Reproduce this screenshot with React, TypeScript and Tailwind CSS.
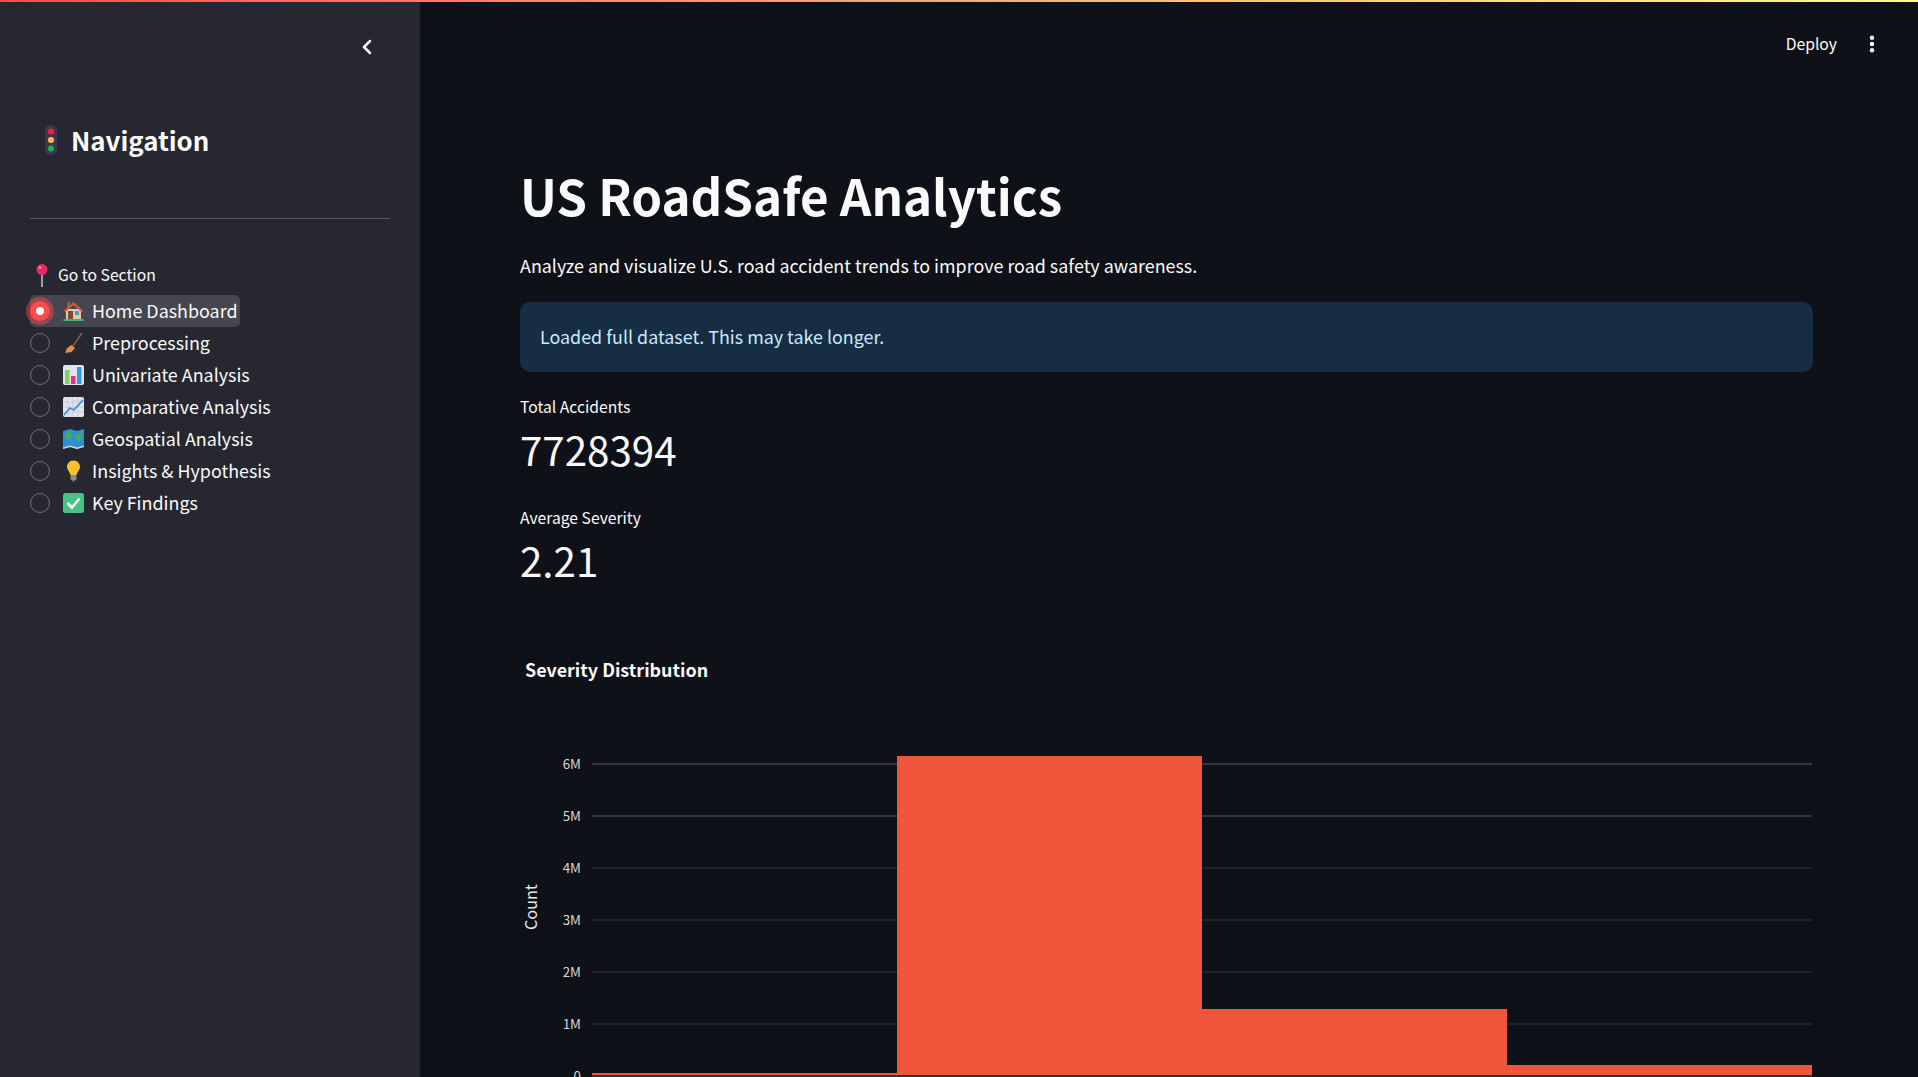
import { ChevronLeft } from 'lucide-react';
import type { ReactNode } from 'react';

const font = '[font-family:"Noto_Sans_CJK_SC","Liberation_Sans",sans-serif]';

function TrafficLight() {
  return (
    <svg width="14" height="30" viewBox="0 0 14 30">
      <rect x="1" y="0" width="12" height="30" rx="6" fill="#40344f" />
      <circle cx="7" cy="6.5" r="3" fill="#f0213f" />
      <circle cx="7" cy="15" r="3" fill="#fbbf4d" />
      <circle cx="7" cy="23.5" r="3" fill="#0fb94f" />
    </svg>
  );
}

function Pin() {
  return (
    <svg width="14" height="24" viewBox="0 0 14 24">
      <rect x="6" y="11" width="2" height="13" fill="#9aa0a8" />
      <circle cx="7" cy="6.5" r="5.5" fill="#e8265f" />
      <circle cx="5" cy="4.5" r="1.5" fill="#f78aa8" />
    </svg>
  );
}

const House = (
  <svg width="21" height="22" viewBox="0 0 21 22">
    <rect x="4" y="2" width="3" height="6" fill="#a5573c" />
    <rect x="3" y="9" width="15" height="10" fill="#e8c9a0" />
    <path d="M0.5 11 L10.5 2 L20.5 11 L18.5 12 L10.5 5 L2.5 12 Z" fill="#d9553f" />
    <rect x="5" y="11" width="5" height="8" fill="#7a4a35" />
    <rect x="12" y="11" width="4" height="4" fill="#3ba4e8" />
    <rect x="0.5" y="19" width="20" height="2" fill="#3fb86a" />
  </svg>
);

const Broom = (
  <svg width="21" height="22" viewBox="0 0 21 22">
    <path d="M19 1 L9.5 14.5" stroke="#8a5a52" strokeWidth="1.5" fill="none" />
    <path d="M8 13 L12 16 L8.5 20 L2 21 L4 16.5 Z" fill="#ee8a4a" />
  </svg>
);

const Bars = (
  <svg width="21" height="22" viewBox="0 0 21 22">
    <rect x="0" y="1" width="21" height="20" rx="2" fill="#e4e2ea" />
    <rect x="2" y="6" width="4.5" height="14" fill="#7fd35a" />
    <rect x="8" y="12" width="4.5" height="8" fill="#ea2f7d" />
    <rect x="14" y="3" width="4.5" height="17" fill="#2f9be8" />
  </svg>
);

const ChartUp = (
  <svg width="21" height="22" viewBox="0 0 21 22">
    <rect x="0" y="1" width="21" height="20" rx="2" fill="#e4e2ea" />
    <path d="M5 1V21M10 1V21M15 1V21M0 6H21M0 11H21M0 16H21" stroke="#c5c2cc" strokeWidth="0.7" />
    <path d="M1 19 L7 12 L11 14 L20 4" stroke="#3a8de0" strokeWidth="1.8" fill="none" />
  </svg>
);

const WorldMap = (
  <svg width="21" height="22" viewBox="0 0 21 22">
    <path d="M0 3 L7 1 L14 3 L21 1 V19 L14 21 L7 19 L0 21 Z" fill="#2f8fd0" />
    <path d="M3 5 L8 4 L9 9 L6 12 L3 9 Z M12 6 L18 5 L19 10 L16 15 L13 11 Z" fill="#3fae5a" />
    <path d="M0 19.5 L7 17.5 L14 19.5 L21 17.5 V19 L14 21 L7 19 L0 21 Z" fill="#d8d6dc" />
  </svg>
);

const Bulb = (
  <svg width="21" height="22" viewBox="0 0 21 22">
    <path d="M10.5 0.5 C15 0.5 17 4 17 7 C17 10 14 12 13.5 15 H7.5 C7 12 4 10 4 7 C4 4 6 0.5 10.5 0.5 Z" fill="#fbc02d" />
    <rect x="7.5" y="15" width="6" height="5" rx="1" fill="#8f8a9a" />
    <rect x="9" y="20" width="3" height="1.5" fill="#6f6a7a" />
  </svg>
);

const Check = (
  <svg width="21" height="22" viewBox="0 0 21 22">
    <rect x="0" y="1" width="21" height="20" rx="2.5" fill="#48c285" />
    <path d="M4.5 11 L9 15.5 L16.5 6.5" stroke="#fff" strokeWidth="2.6" fill="none" />
  </svg>
);

const sections: { label: string; icon: ReactNode }[] = [
  { label: 'Home Dashboard', icon: House },
  { label: 'Preprocessing', icon: Broom },
  { label: 'Univariate Analysis', icon: Bars },
  { label: 'Comparative Analysis', icon: ChartUp },
  { label: 'Geospatial Analysis', icon: WorldMap },
  { label: 'Insights & Hypothesis', icon: Bulb },
  { label: 'Key Findings', icon: Check },
];

function Sidebar() {
  return (
    <aside className="w-[420px] shrink-0 bg-[#262730] px-[30px] flex flex-col">
      <div className="h-[45px] mt-[22px] flex justify-end items-center pr-[11px]">
        <ChevronLeft className="h-[24px] w-[24px] text-white" strokeWidth={2.5} />
      </div>
      <div className="mt-[46px] flex items-center h-[50px] pl-[14px] gap-[13px]">
        <TrafficLight />
        <h2 className="text-[25.8px] font-semibold text-white leading-none">Navigation</h2>
      </div>
      <hr className="mt-[53px] border-0 h-px bg-[#55565e]" />
      <div className="mt-[44px] h-[24px] flex items-center gap-[9px] pl-[5px] text-[15.7px] text-[#fafafa]">
        <Pin />
        <span>Go to Section</span>
      </div>
      <div className="mt-[8px] flex flex-col">
        {sections.map((s, i) => (
          <div key={s.label} className="h-[32px] flex items-center relative">
            {i === 0 && (
              <div className="absolute left-0 top-0 bottom-0 w-[210px] rounded-[5px] bg-[#45464f]" />
            )}
            {i === 0 ? (
              <span className="relative w-[20px] h-[20px] rounded-full bg-[#ff4b4b] shadow-[0_0_0_4px_rgba(255,75,75,0.45)] flex items-center justify-center">
                <span className="w-[8px] h-[8px] rounded-full bg-white" />
              </span>
            ) : (
              <span className="w-[20px] h-[20px] rounded-full border border-[#6e6f77]" />
            )}
            <span className="relative ml-[13px] w-[21px] h-[22px] flex">{s.icon}</span>
            <span className="relative ml-[8px] text-[17.9px] leading-none text-[#fafafa]">{s.label}</span>
          </div>
        ))}
      </div>
    </aside>
  );
}

function Metric({ label, value }: { label: string; value: string }) {
  return (
    <div className="h-[111px]">
      <div className="text-[15.7px] leading-[24px] text-[#fafafa]">{label}</div>
      <div className="text-[40.3px] leading-[60px] text-[#fafafa]">{value}</div>
    </div>
  );
}

const ticks = [
  { label: '6M', y: 64, h: 2 },
  { label: '5M', y: 116, h: 2 },
  { label: '4M', y: 168, h: 1 },
  { label: '3M', y: 220, h: 1 },
  { label: '2M', y: 272, h: 1 },
  { label: '1M', y: 324, h: 1 },
  { label: '0', y: 376, h: 0 },
];

function SeverityChart() {
  return (
    <svg width="1293" height="377" viewBox="0 0 1293 377" className="block">
      {ticks.map((t) => (
        <g key={t.label}>
          {t.h > 0 && <rect x="72" y={t.y - t.h / 2} width="1220" height={t.h} fill="#33343c" />}
          <text x="61" y={t.y + 5} textAnchor="end" fontSize="13.4" fill="#d5d6d9">
            {t.label}
          </text>
        </g>
      ))}
      <text transform="translate(17 207) rotate(-90)" textAnchor="middle" fontSize="16.2" fill="#e6e7e9">
        Count
      </text>
      <rect x="72" y="373" width="305" height="2" fill="#f0563b" />
      <rect x="377" y="56" width="305" height="319" fill="#f0563b" />
      <rect x="682" y="309" width="305" height="66" fill="#f0563b" />
      <rect x="987" y="365" width="305" height="10" fill="#f0563b" />
      <rect x="72" y="375" width="1220" height="2" fill="#31333f" />
    </svg>
  );
}

export default function App() {
  return (
    <div className={`h-screen overflow-hidden bg-[#0e1117] flex flex-col ${font}`}>
      <div className="h-[2px] shrink-0 bg-gradient-to-r from-[#ff4b4b] to-[#fffd80]" />
      <div className="flex-1 flex min-h-0">
        <Sidebar />
        <main className="flex-1 pl-[100px] pr-[105px] relative">
          <div className="absolute right-[43px] top-[30px] flex items-center gap-[32px] text-[#fafafa]">
            <span className="text-[15.7px]">Deploy</span>
            <svg width="6" height="18" viewBox="0 0 6 18" className="fill-[#fafafa]">
              <circle cx="3" cy="2.8" r="2.2" />
              <circle cx="3" cy="9" r="2.2" />
              <circle cx="3" cy="15.2" r="2.2" />
            </svg>
          </div>
          <h1 className="mt-[158px] text-[49.3px] leading-[70px] font-bold text-[#fafafa]">US RoadSafe Analytics</h1>
          <p className="mt-[19px] text-[17.9px] leading-[32px] text-[#fafafa]">
            Analyze and visualize U.S. road accident trends to improve road safety awareness.
          </p>
          <div className="mt-[21px] h-[70px] rounded-[10px] bg-[#172d43] px-[20px] pb-px flex items-center text-[17.9px] text-[#c7ebff]">
            Loaded full dataset. This may take longer.
          </div>
          <div className="mt-[23px]">
            <Metric label="Total Accidents" value="7728394" />
            <Metric label="Average Severity" value="2.21" />
          </div>
          <h3 className="mt-[38px] pl-[5px] text-[17.9px] leading-[28px] font-bold text-[#fafafa]">Severity Distribution</h3>
          <div className="mt-[17px]">
            <SeverityChart />
          </div>
        </main>
      </div>
    </div>
  );
}
